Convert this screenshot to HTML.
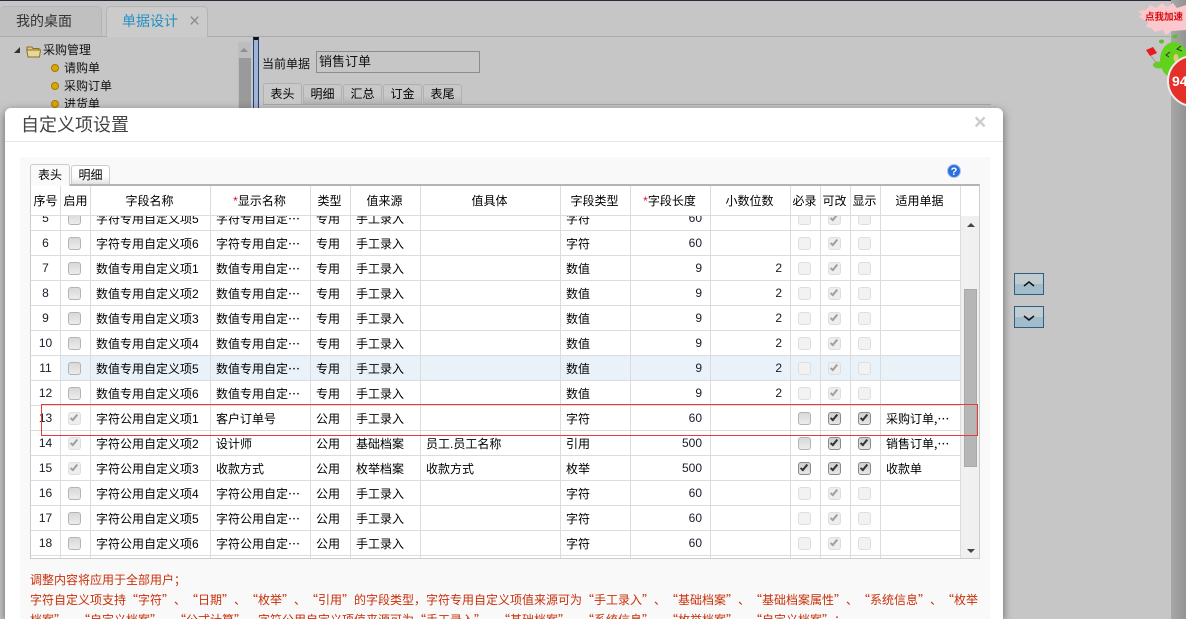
<!DOCTYPE html>
<html lang="zh-CN">
<head>
<meta charset="utf-8">
<title>自定义项设置</title>
<style>
html,body{margin:0;padding:0;width:1186px;height:619px;overflow:hidden}
body{position:relative;background:#c6c6c6;font:12px "Liberation Sans","Noto Sans CJK SC",sans-serif;color:#000}
.a{position:absolute;white-space:nowrap}
.tab{position:absolute;top:6px;height:30px;line-height:29px;box-sizing:border-box;border:1px solid #b4b4b4;border-bottom:0;border-radius:5px 5px 0 0;font-size:14px;color:#333}
.st{position:absolute;box-sizing:border-box;border:1px solid #b0b0b0;border-bottom:0;border-radius:3px 3px 0 0;text-align:center;background:linear-gradient(#c8c8c8 55%,#b4b4b4)}
.dt{position:absolute;box-sizing:border-box;border:1px solid #ccc;border-bottom:0;border-radius:3px 3px 0 0;text-align:center;background:linear-gradient(#fff 55%,#ddd)}
table{border-collapse:separate;border-spacing:0;table-layout:fixed;width:930px}
td,th{box-sizing:border-box;border-right:1px solid #dcdcdc;border-bottom:1px solid #dcdcdc;padding:0 0 0 5px;font-weight:normal;overflow:hidden;white-space:nowrap;font-size:12px}
th{height:30px;text-align:center;padding:0 2px 0 0}
th:first-child,th:nth-child(2){padding:0}
td{height:25px;background:#fff}
td.n{text-align:right;padding:0 8px 0 0;color:#1a1a2a}
td.s{text-align:center;padding:0;color:#1a1a2a}
td.x{text-align:center;padding:0}
td.l{font-family:"Noto Sans CJK SC","Liberation Sans",sans-serif}
tr.h td{background:#e9f1f9}
tr.h td:first-child{background:#fff}
i{display:block;box-sizing:border-box;width:13px;height:13px;margin:1px auto 0;border-radius:3px;border:1px solid #b4b4b4;background:linear-gradient(#d8d8d8,#ececec);position:relative;left:-1px}
i.d{border-color:#dedede;background:#f2f2f2}
i.k::after,i.dk::after{content:"";position:absolute;left:3px;top:0;width:4px;height:8px;box-sizing:border-box;border-right:2px solid #333;border-bottom:2px solid #333;transform:rotate(40deg)}
i.k{border-color:#8a8a8a;background:linear-gradient(#cfcfcf,#e6e6e6)}
i.dk{border-color:#dedede;background:#eeeeee}
i.dk::after{border-color:#a0a0a0}
b.r{color:#e01030;font-weight:normal}
.note{position:absolute;left:30px;white-space:nowrap;font:12px/20px "Noto Sans CJK SC","Liberation Sans",sans-serif;color:#c8300a;text-spacing-trim:space-all;font-kerning:none}
.tr{position:absolute;left:64px;white-space:nowrap;line-height:16px;color:#111}
.dot{position:absolute;left:51px;width:8px;height:8px;border-radius:50%;background:#d8a800;border:1px solid #a87800;box-sizing:border-box}
.btn{position:absolute;left:1014px;width:30px;height:22px;box-sizing:border-box;border:1px solid #2c5f80;background:linear-gradient(#c2cbd0 50%,#a3bccb 50%)}
</style>
</head>
<body>
<div class="a" style="left:0;top:0;width:1186px;height:1px;background:#262c3c"></div>
<div class="a" style="left:0;top:36px;width:1171px;height:1px;background:#aaa"></div>
<div class="tab" style="left:0;width:102px;padding-left:16px;background:#c0c0c0;border-left:0">我的桌面</div>
<div class="tab" style="left:106px;width:102px;height:31px;padding-left:15px;background:#cbcbcb;color:#2590c4">单据设计<span class="a" style="left:82px;top:0;color:#8c8c8c;font-size:19px">×</span></div>

<div class="a" style="left:1171px;top:0;width:15px;height:619px;background:linear-gradient(90deg,#a8a8a8,#939393)"></div>

<!-- tree -->
<div class="a" style="left:14px;top:47px;width:0;height:0;border-left:6px solid transparent;border-bottom:6px solid #333"></div>
<svg class="a" style="left:26px;top:44px" width="16" height="14" viewBox="0 0 16 14"><path d="M1 3h5l1 1.500h6v2H1z" fill="#d8c890" stroke="#8a7020"/><path d="M.8 6h13.700l-1 7H2z" fill="#e8d898" stroke="#8a7020"/></svg>
<div class="tr" style="left:43px;top:42px">采购管理</div>
<div class="dot" style="top:64px"></div><div class="tr" style="top:60px">请购单</div>
<div class="dot" style="top:82px"></div><div class="tr" style="top:78px">采购订单</div>
<div class="dot" style="top:100px"></div><div class="tr" style="top:96px">进货单</div>
<div class="a" style="left:238px;top:42px;width:13px;height:70px;background:#bdbdbd"></div>
<div class="a" style="left:240px;top:48px;width:0;height:0;border:4px solid transparent;border-top:0;border-bottom:4px solid #8e8e8e"></div>
<div class="a" style="left:239px;top:58px;width:12px;height:55px;background:#9a9a9a"></div>
<div class="a" style="left:253px;top:37px;width:6px;height:75px;box-sizing:border-box;background:#a4b4cc;border:1px solid #1c3f88;border-top:3px solid #111"></div>

<!-- form behind -->
<div class="a" style="left:262px;top:55px;color:#111">当前单据</div>
<div class="a" style="left:316px;top:51px;width:164px;height:22px;box-sizing:border-box;border:1px solid #8c8c8c;padding-left:2px;font-size:13px;line-height:19px;color:#111">销售订单</div>
<div class="st" style="left:263px;top:83px;width:39px;height:22px;line-height:21px;background:#c9c9c9">表头</div>
<div class="st" style="left:303px;top:84px;width:39px;height:20px;line-height:19px">明细</div>
<div class="st" style="left:343px;top:84px;width:39px;height:20px;line-height:19px">汇总</div>
<div class="st" style="left:383px;top:84px;width:39px;height:20px;line-height:19px">订金</div>
<div class="st" style="left:423px;top:84px;width:39px;height:20px;line-height:19px">表尾</div>
<div class="a" style="left:263px;top:104px;width:728px;height:1px;background:#a8a8a8"></div>

<!-- mascot -->
<svg class="a" style="left:1136px;top:0" width="50" height="110" viewBox="1136 0 50 110">
<polygon points="1138,11 1146,10 1150,5 1156,8 1162,3 1167,7 1173,3 1177,8 1186,5 1186,30 1172,31 1166,35 1163,30 1155,32 1151,28 1146,27 1148,22 1139,17 1142,14" fill="#fbc8ce"/>
<ellipse cx="1161.500" cy="41.500" rx="2.500" ry="2" fill="#5cc020"/>
<ellipse cx="1175" cy="36.500" rx="2.500" ry="2" fill="#5cc020"/>
<ellipse cx="1174" cy="60" rx="14" ry="18" fill="#62d21c"/>
<ellipse cx="1159" cy="65" rx="6" ry="3.500" fill="#62d21c"/>
<polygon points="1146,50 1153,47 1157,53 1150,56" fill="#e81c20"/>
<path d="M1151 56l7 9" stroke="#999" fill="none"/>
<path d="M1170 52l-4 3 3 2M1181 46l-4 3 5 2" stroke="#333" fill="none"/>
<ellipse cx="1176" cy="58" rx="2.500" ry="4" fill="#e8c870"/>
<circle cx="1193" cy="81" r="25" fill="#e5302a" stroke="#eee" stroke-width="2"/>
</svg>
<div class="a" style="left:1145px;top:11px;font-size:9.5px;line-height:13px;font-weight:bold;color:#d80c10">点我加速</div>
<div class="a" style="left:1172px;top:73px;font:bold 14px/16px 'Liberation Sans',sans-serif;color:#fff">94</div>

<!-- side buttons -->
<div class="btn" style="top:273px"><svg width="28" height="20" style="display:block"><path d="M9 12l5-4 5 4" fill="none" stroke="#111" stroke-width="1.500"/></svg></div>
<div class="btn" style="top:306px"><svg width="28" height="20" style="display:block"><path d="M9 9l5 4 5-4" fill="none" stroke="#111" stroke-width="1.500"/></svg></div>

<!-- modal -->
<div class="a" style="left:5px;top:108px;width:998px;height:511px;background:#fff;border-radius:6px 6px 0 0;box-shadow:0 3px 9px rgba(0,0,0,.5)"></div>
<div class="a" style="left:5px;top:141px;width:998px;height:1px;background:#e5e5e5"></div>
<div class="a" style="left:21px;top:112px;font-size:18px;line-height:26px;color:#444">自定义项设置</div>
<div class="a" style="left:974px;top:111px;font:bold 21px/24px 'Liberation Sans',sans-serif;color:#ccc">×</div>
<div class="a" style="left:20px;top:157px;width:970px;height:462px;background:#f9f9f9"></div>

<div class="dt" style="left:30px;top:164px;width:40px;height:22px;line-height:21px;background:#fafafa;z-index:2">表头</div>
<div class="dt" style="left:71px;top:165px;width:39px;height:20px;line-height:19px">明细</div>
<svg class="a" style="left:947px;top:164px" width="14" height="14" viewBox="0 0 14 14"><circle cx="7" cy="7" r="6.500" fill="#2f6fdc" stroke="#a8c4f0"/><text x="7" y="11" font-family="Liberation Sans" font-size="11" font-weight="bold" fill="#fff" text-anchor="middle">?</text></svg>

<!-- grid container -->
<div class="a" style="left:30px;top:184px;width:950px;height:375px;box-sizing:border-box;background:#fff;border:1px solid #ccc;border-top:2px solid #b4b4b4"></div>
<table class="a" style="left:31px;top:186px;white-space:normal">
<colgroup><col style="width:30px"><col style="width:30px"><col style="width:120px"><col style="width:100px"><col style="width:40px"><col style="width:70px"><col style="width:140px"><col style="width:70px"><col style="width:80px"><col style="width:80px"><col style="width:30px"><col style="width:30px"><col style="width:30px"><col style="width:80px"></colgroup>
<tr><th>序号</th><th>启用</th><th>字段名称</th><th><b class="r">*</b>显示名称</th><th>类型</th><th>值来源</th><th>值具体</th><th>字段类型</th><th><b class="r">*</b>字段长度</th><th>小数位数</th><th>必录</th><th>可改</th><th>显示</th><th>适用单据</th></tr>
</table>

<div class="a" style="left:31px;top:216px;width:930px;height:342px;overflow:hidden">
<table style="margin-top:-10px">
<colgroup><col style="width:30px"><col style="width:30px"><col style="width:120px"><col style="width:100px"><col style="width:40px"><col style="width:70px"><col style="width:140px"><col style="width:70px"><col style="width:80px"><col style="width:80px"><col style="width:30px"><col style="width:30px"><col style="width:30px"><col style="width:80px"></colgroup>
<tr><td class="s">5</td><td class="x"><i></i></td><td>字符专用自定义项5</td><td class="l">字符专用自定…</td><td>专用</td><td>手工录入</td><td></td><td>字符</td><td class="n">60</td><td class="n"></td><td class="x"><i class="d"></i></td><td class="x"><i class="dk"></i></td><td class="x"><i class="d"></i></td><td></td></tr>
<tr><td class="s">6</td><td class="x"><i></i></td><td>字符专用自定义项6</td><td class="l">字符专用自定…</td><td>专用</td><td>手工录入</td><td></td><td>字符</td><td class="n">60</td><td class="n"></td><td class="x"><i class="d"></i></td><td class="x"><i class="dk"></i></td><td class="x"><i class="d"></i></td><td></td></tr>
<tr><td class="s">7</td><td class="x"><i></i></td><td>数值专用自定义项1</td><td class="l">数值专用自定…</td><td>专用</td><td>手工录入</td><td></td><td>数值</td><td class="n">9</td><td class="n">2</td><td class="x"><i class="d"></i></td><td class="x"><i class="dk"></i></td><td class="x"><i class="d"></i></td><td></td></tr>
<tr><td class="s">8</td><td class="x"><i></i></td><td>数值专用自定义项2</td><td class="l">数值专用自定…</td><td>专用</td><td>手工录入</td><td></td><td>数值</td><td class="n">9</td><td class="n">2</td><td class="x"><i class="d"></i></td><td class="x"><i class="dk"></i></td><td class="x"><i class="d"></i></td><td></td></tr>
<tr><td class="s">9</td><td class="x"><i></i></td><td>数值专用自定义项3</td><td class="l">数值专用自定…</td><td>专用</td><td>手工录入</td><td></td><td>数值</td><td class="n">9</td><td class="n">2</td><td class="x"><i class="d"></i></td><td class="x"><i class="dk"></i></td><td class="x"><i class="d"></i></td><td></td></tr>
<tr><td class="s">10</td><td class="x"><i></i></td><td>数值专用自定义项4</td><td class="l">数值专用自定…</td><td>专用</td><td>手工录入</td><td></td><td>数值</td><td class="n">9</td><td class="n">2</td><td class="x"><i class="d"></i></td><td class="x"><i class="dk"></i></td><td class="x"><i class="d"></i></td><td></td></tr>
<tr class="h"><td class="s">11</td><td class="x"><i></i></td><td>数值专用自定义项5</td><td class="l">数值专用自定…</td><td>专用</td><td>手工录入</td><td></td><td>数值</td><td class="n">9</td><td class="n">2</td><td class="x"><i class="d"></i></td><td class="x"><i class="dk"></i></td><td class="x"><i class="d"></i></td><td></td></tr>
<tr><td class="s">12</td><td class="x"><i></i></td><td>数值专用自定义项6</td><td class="l">数值专用自定…</td><td>专用</td><td>手工录入</td><td></td><td>数值</td><td class="n">9</td><td class="n">2</td><td class="x"><i class="d"></i></td><td class="x"><i class="dk"></i></td><td class="x"><i class="d"></i></td><td></td></tr>
<tr><td class="s">13</td><td class="x"><i class="dk"></i></td><td>字符公用自定义项1</td><td>客户订单号</td><td>公用</td><td>手工录入</td><td></td><td>字符</td><td class="n">60</td><td class="n"></td><td class="x"><i></i></td><td class="x"><i class="k"></i></td><td class="x"><i class="k"></i></td><td class="l">采购订单,…</td></tr>
<tr><td class="s">14</td><td class="x"><i class="dk"></i></td><td>字符公用自定义项2</td><td>设计师</td><td>公用</td><td>基础档案</td><td>员工.员工名称</td><td>引用</td><td class="n">500</td><td class="n"></td><td class="x"><i></i></td><td class="x"><i class="k"></i></td><td class="x"><i class="k"></i></td><td class="l">销售订单,…</td></tr>
<tr><td class="s">15</td><td class="x"><i class="dk"></i></td><td>字符公用自定义项3</td><td>收款方式</td><td>公用</td><td>枚举档案</td><td>收款方式</td><td>枚举</td><td class="n">500</td><td class="n"></td><td class="x"><i class="k"></i></td><td class="x"><i class="k"></i></td><td class="x"><i class="k"></i></td><td>收款单</td></tr>
<tr><td class="s">16</td><td class="x"><i></i></td><td>字符公用自定义项4</td><td class="l">字符公用自定…</td><td>公用</td><td>手工录入</td><td></td><td>字符</td><td class="n">60</td><td class="n"></td><td class="x"><i class="d"></i></td><td class="x"><i class="dk"></i></td><td class="x"><i class="d"></i></td><td></td></tr>
<tr><td class="s">17</td><td class="x"><i></i></td><td>字符公用自定义项5</td><td class="l">字符公用自定…</td><td>公用</td><td>手工录入</td><td></td><td>字符</td><td class="n">60</td><td class="n"></td><td class="x"><i class="d"></i></td><td class="x"><i class="dk"></i></td><td class="x"><i class="d"></i></td><td></td></tr>
<tr><td class="s">18</td><td class="x"><i></i></td><td>字符公用自定义项6</td><td class="l">字符公用自定…</td><td>公用</td><td>手工录入</td><td></td><td>字符</td><td class="n">60</td><td class="n"></td><td class="x"><i class="d"></i></td><td class="x"><i class="dk"></i></td><td class="x"><i class="d"></i></td><td></td></tr>
<tr><td></td><td></td><td></td><td></td><td></td><td></td><td></td><td></td><td></td><td></td><td></td><td></td><td></td><td></td></tr>
</table>
</div>

<!-- grid scrollbar -->
<div class="a" style="left:961px;top:216px;width:18px;height:342px;background:#f0f0f0"></div>
<div class="a" style="left:967px;top:223px;width:0;height:0;border:4px solid transparent;border-top:0;border-bottom:4px solid #444"></div>
<div class="a" style="left:967px;top:549px;width:0;height:0;border:4px solid transparent;border-bottom:0;border-top:4px solid #444"></div>
<div class="a" style="left:964px;top:289px;width:13px;height:178px;background:#b6b6b6;box-sizing:border-box;border:1px solid #aaa"></div>

<!-- red annotation -->
<div class="a" style="left:41px;top:404px;width:937px;height:32px;box-sizing:border-box;border:1px solid #e83c3c"></div>

<!-- notes -->
<div class="note" style="left:30px;top:570px">调整内容将应用于全部用户；</div>
<div class="note" style="left:30px;top:590px">字符自定义项支持“字符”、“日期”、“枚举”、“引用”的字段类型，字符专用自定义项值来源可为“手工录入”、“基础档案”、“基础档案属性”、“系统信息”、“枚举</div>
<div class="note" style="left:30px;top:610px">档案”、“自定义档案”、“公式计算”，字符公用自定义项值来源可为“手工录入”、“基础档案”、“系统信息”、“枚举档案”、“自定义档案”；</div>
</body>
</html>
